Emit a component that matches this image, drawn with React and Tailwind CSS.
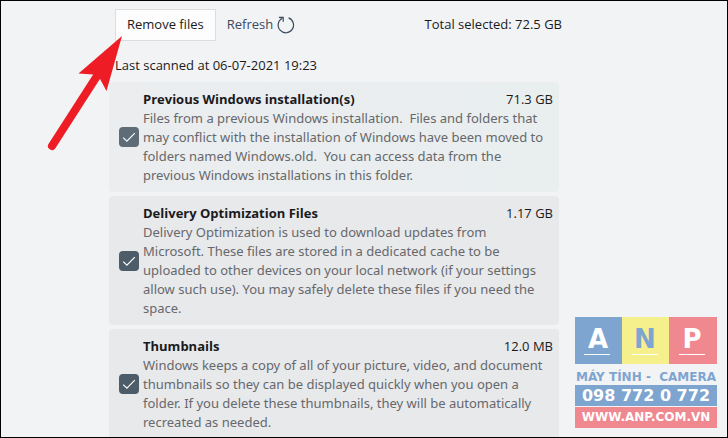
import { useState } from "react";

const items = [
  {
    id: "previous",
    title: "Previous Windows installation(s)",
    size: "71.3 GB",
    card: "bg-linear-to-r from-[#ebedef] to-[#e9eeef]",
    box: "bg-[#5d6c77]",
    lines: [
      "Files from a previous Windows installation.  Files and folders that",
      "may conflict with the installation of Windows have been moved to",
      "folders named Windows.old.  You can access data from the",
      "previous Windows installations in this folder.",
    ],
  },
  {
    id: "delivery",
    title: "Delivery Optimization Files",
    size: "1.17 GB",
    card: "bg-[#e8e9eb]",
    box: "bg-[#4c5c68]",
    lines: [
      "Delivery Optimization is used to download updates from",
      "Microsoft. These files are stored in a dedicated cache to be",
      "uploaded to other devices on your local network (if your settings",
      "allow such use). You may safely delete these files if you need the",
      "space.",
    ],
  },
  {
    id: "thumbnails",
    title: "Thumbnails",
    size: "12.0 MB",
    card: "bg-[#e8e9eb]",
    box: "bg-[#4c5c68]",
    lines: [
      "Windows keeps a copy of all of your picture, video, and document",
      "thumbnails so they can be displayed quickly when you open a",
      "folder. If you delete these thumbnails, they will be automatically",
      "recreated as needed.",
    ],
  },
];

const RefreshIcon = () => (
  <svg className="size-[18px]" viewBox="0 0 18 18" fill="none" stroke="currentColor" strokeWidth="1.2" aria-hidden="true">
    <path d="M11.6 1.9A7.7 7.7 0 1 1 5.2 2.3" />
    <path d="M1.9 1.4H6.2V5.8" />
  </svg>
);

const FileItem = ({ item, checked, onToggle }) => (
  <li className={`${item.card} flex items-center gap-1 rounded py-[7px] pr-[6px] pl-[10px]`}>
    <span className="relative flex shrink-0">
      <input
        id={item.id}
        type="checkbox"
        checked={checked}
        onChange={onToggle}
        className={`${item.box} size-5 appearance-none rounded`}
      />
      {checked && (
        <svg className="pointer-events-none absolute inset-0 size-5" viewBox="0 0 20 20" fill="none" stroke="#fff" strokeWidth="1.2" aria-hidden="true">
          <path d="M4.2 10.6L7.9 14.2L15.8 6.2" />
        </svg>
      )}
    </span>
    <label htmlFor={item.id} className="min-w-0 flex-1">
      <span className="flex justify-between text-[13px] leading-5 text-[#1a1a1c]">
        <span className="font-bold">{item.title}</span>
        <span>{item.size}</span>
      </span>
      <span className="block font-['Noto_Sans',sans-serif] text-[13px] leading-[19px] whitespace-pre text-[#66686b]">
        {item.lines.join("\n")}
      </span>
    </label>
  </li>
);

const Logo = () => (
  <svg className="absolute right-[10px] bottom-[9px] w-[142px]" viewBox="0 0 142 111" fontFamily="'DejaVu Sans', sans-serif" fontWeight="bold" textAnchor="middle">
    <rect width="47" height="47" fill="#7ea5d0" />
    <rect x="47" width="47" height="47" fill="#f5f08c" />
    <rect x="94" width="48" height="47" fill="#f0888f" />
    <text x="23" y="31" fontSize="26" fill="#fff">A</text>
    <text x="70" y="31" fontSize="26" fill="#7ea5d0">N</text>
    <text x="117" y="31" fontSize="26" fill="#fff">P</text>
    <path d="M9 37.5H35M57 37.5H83M104 37.5H130" stroke="#fff" />
    <text x="71" y="64" fontSize="12" fill="#7ea5d0" xmlSpace="preserve">MÁY TÍNH -  CAMERA</text>
    <rect y="68" width="142" height="21" fill="#7ea5d0" />
    <text x="71" y="84" fontSize="16" fill="#fff">098 772 0 772</text>
    <rect y="90" width="142" height="21" fill="#f0888f" />
    <text x="71" y="104" fontSize="12" fill="#fff">WWW.ANP.COM.VN</text>
  </svg>
);

const Arrow = () => (
  <svg className="pointer-events-none absolute top-[34px] left-[46px] h-[118px] w-[78px]" viewBox="47 35 78 118" aria-hidden="true">
    <path d="M97 76L52 146" stroke="#ee1c25" strokeWidth="8" strokeLinecap="round" />
    <path d="M122 36L78.500 73.500L93 74.500L99.500 78L106.500 91Z" fill="#ee1c25" />
  </svg>
);

const App = () => {
  const [selected, setSelected] = useState(["previous", "delivery", "thumbnails"]);

  const toggle = (id) =>
    setSelected((prev) => (prev.includes(id) ? prev.filter((s) => s !== id) : [...prev, id]));

  return (
    <main className="relative h-screen overflow-hidden border border-black bg-[#f2f3f5] pt-2 pl-[108px] font-['Open_Sans',sans-serif] text-[13px] text-[#1a1a1c]">
      <div className="flex w-full max-w-[453px] items-center pl-[6px]">
        <button type="button" className="h-8 border border-[#dcdddf] bg-[#fdfdfd] px-[11px] text-[13px]">
          Remove files
        </button>
        <button type="button" className="ml-[11px] flex items-center gap-1 text-[13px] text-[#3b4a5c]">
          Refresh
          <RefreshIcon />
        </button>
        <p className="ml-auto">Total selected: 72.5 GB</p>
      </div>
      <div className="w-full max-w-[450px]">
        <p className="mt-[14px] mb-[7px] pl-[6px] leading-5">Last scanned at 06-07-2021 19:23</p>
        <ul className="flex flex-col gap-1">
          {items.map((item) => (
            <FileItem
              key={item.id}
              item={item}
              checked={selected.includes(item.id)}
              onToggle={() => toggle(item.id)}
            />
          ))}
        </ul>
      </div>
      <Arrow />
      <Logo />
    </main>
  );
};

export default App;
